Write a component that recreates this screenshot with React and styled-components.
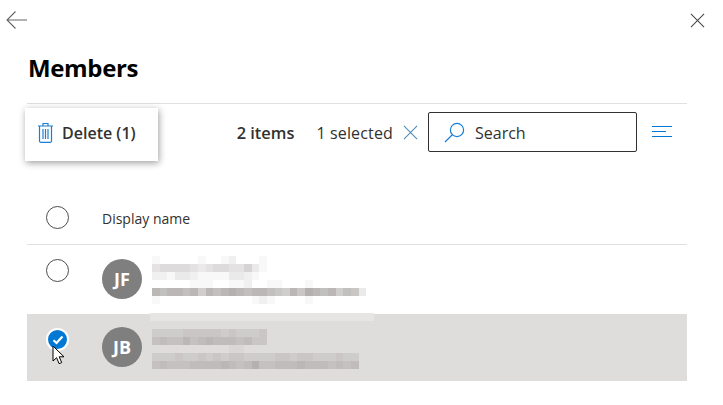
import React from "react";
import styled, { createGlobalStyle } from "styled-components";

const GlobalStyle = createGlobalStyle`
  html, body {
    margin: 0;
    background: #fff;
    font-family: "Open Sans", "Noto Sans", sans-serif;
    color: #323130;
  }
`;

const Page = styled.div`
  width: 723px;
  height: 405px;
  overflow: hidden;
  display: flex;
  flex-direction: column;
`;

const TopBar = styled.div`
  height: 41px;
  padding: 9px 18px 0 6px;
  box-sizing: border-box;
  display: flex;
  justify-content: space-between;
  align-items: flex-start;
`;

const IconButton = styled.button`
  border: none;
  background: none;
  padding: 0;
  display: flex;
  line-height: 0;
`;

const CloseButton = styled(IconButton)`
  margin-top: 4px;
`;

const Body = styled.div`
  padding: 0 36px 0 27px;
  display: flex;
  flex-direction: column;
`;

const Title = styled.h1`
  margin: 0;
  height: 63px;
  box-sizing: border-box;
  padding: 10px 0 0 1px;
  font-size: 24px;
  line-height: 34px;
  font-weight: 700;
  letter-spacing: -0.35px;
  color: #000;
  border-bottom: 1px solid #e1e0df;
`;

const Toolbar = styled.div`
  position: relative;
  height: 56px;
  display: flex;
  align-items: center;
  justify-content: flex-end;
  padding-right: 15px;
`;

const DeleteButton = styled.button`
  position: absolute;
  left: -2px;
  top: 4px;
  width: 133px;
  height: 53px;
  border: none;
  background: #fff;
  box-shadow: 1px 2px 7px rgba(0, 0, 0, 0.38);
  display: flex;
  align-items: center;
  gap: 8px;
  padding: 0 0 4px 12px;
  font: 600 16px "Open Sans", sans-serif;
  color: #323130;
`;

const Count = styled.span`
  font-size: 16.4px;
  font-weight: 600;
  margin-right: 22px;
`;

const Selected = styled.span`
  font-size: 16px;
  letter-spacing: 0.15px;
  padding-top: 1px;
  margin-right: 10px;
`;

const ClearButton = styled(IconButton)`
  margin-right: 10px;
`;

const SearchBox = styled.div`
  width: 209px;
  height: 40px;
  box-sizing: border-box;
  border: 1px solid #323130;
  border-radius: 2px;
  display: flex;
  align-items: center;
  gap: 10px;
  padding-left: 15px;
  font-size: 16px;
  margin-right: 15px;
`;

const SearchText = styled.span`
  padding-top: 1px;
`;

const HeaderRow = styled.div`
  height: 85px;
  box-sizing: border-box;
  padding-top: 46px;
  border-bottom: 1px solid #e1e0df;
  display: flex;
  align-items: flex-start;
`;

const HeaderLabel = styled.span`
  font-size: 14px;
  line-height: 18px;
  padding-top: 4px;
`;

const CheckCell = styled.div`
  width: 75px;
  padding-left: 19px;
  box-sizing: border-box;
  flex: none;
  position: relative;
`;

const Radio = styled.span`
  display: block;
  width: 23px;
  height: 23px;
  box-sizing: border-box;
  border: 1.5px solid #4f4d4b;
  border-radius: 50%;
  background: #fff;
`;

const Checked = styled.span`
  display: flex;
  align-items: center;
  justify-content: center;
  width: 23px;
  height: 23px;
  box-sizing: border-box;
  border: 2px solid #fff;
  border-radius: 50%;
  background: #0078d4;
`;

const Cursor = styled.svg`
  position: absolute;
  left: 25px;
  top: 17px;
`;

const Row = styled.div`
  height: ${(p) => p.$height}px;
  box-sizing: border-box;
  padding-top: ${(p) => p.$radioTop}px;
  background: ${(p) => (p.$selected ? "#dfdddc" : "#fff")};
  display: flex;
  align-items: flex-start;
`;

const Person = styled.div`
  display: flex;
  margin-top: ${(p) => p.$offset}px;
`;

const Avatar = styled.div`
  width: 40px;
  height: 40px;
  flex: none;
  border-radius: 50%;
  background: #7f7f7f;
  color: #fff;
  font-size: 18px;
  font-weight: 700;
  display: flex;
  align-items: center;
  justify-content: center;
  margin-right: 10px;
`;

const Mosaic = styled.div`
  margin-top: ${(p) => p.$top}px;
  display: flex;
  flex-direction: column;
`;

const MosaicRow = styled.div`
  display: flex;
  height: 8px;
`;

const Pixel = styled.span`
  width: 7.67px;
  height: 8px;
  flex: none;
`;

const Band = styled.div`
  width: 224px;
  height: 8px;
  margin-left: -2px;
  background: #e6e5e3;
`;

// redacted name and mail address, one string of grey levels per line
const shade = (code) => {
  const level = parseInt(code, 36);
  if (!level) return "transparent";
  return `rgba(120, 112, 112, ${level / 20})`;
};

const firstPerson = [
  "100000100120001",
  "455554345544631",
  "221332111133210",
  "000001110011200110001000",
  "a9aa9a7a9aba9aa987a8ba9a7983",
  "10000000000001210000100",
];

const secondPerson = [
  "000000000000000",
  "333344444343334",
  "565575676665644",
  "000000000011",
  "333433434344333344344333433",
  "565556666765685566676665656",
];

const Blur = ({ rows, top, children }) => (
  <Mosaic $top={top}>
    {children}
    {rows.map((line, y) => (
      <MosaicRow key={y}>
        {line.split("").map((c, x) => (
          <Pixel key={x} style={{ background: shade(c) }} />
        ))}
      </MosaicRow>
    ))}
  </Mosaic>
);

const Stripe = styled.div`
  height: 1px;
`;

const BackIcon = () => (
  <svg width="22" height="22" viewBox="0 0 22 22" fill="none" stroke="#666" strokeWidth="1.1">
    <path d="M21 11H1M9.5 2.5 1 11l8.5 8.5" />
  </svg>
);

const CloseIcon = ({ size, color }) => (
  <svg width={size} height={size} viewBox="0 0 16 16" fill="none" stroke={color} strokeWidth="1.1">
    <path d="M1 1l14 14M15 1 1 15" />
  </svg>
);

const TrashIcon = () => (
  <svg width="17" height="21" viewBox="0 0 17 21" fill="none" stroke="#1a7fd6" strokeWidth="1.2">
    <path d="M1 4h15M6 4V1.5h5V4M2.5 4v15a1.3 1.3 0 0 0 1.3 1.3h9.4a1.3 1.3 0 0 0 1.3-1.3V4M6 7v10M8.5 7v10M11 7v10" />
  </svg>
);

const SearchIcon = () => (
  <svg width="21" height="21" viewBox="0 0 21 21" fill="none" stroke="#1a7fd6" strokeWidth="1.2">
    <circle cx="13" cy="8" r="6.6" />
    <path d="M8.3 12.8 1 20" />
  </svg>
);

const SortIcon = () => (
  <svg width="20" height="12" viewBox="0 0 20 12" fill="none" stroke="#0078d4" strokeWidth="1">
    <path d="M0 .5h20M0 5.5h14M0 10.5h20" />
  </svg>
);

const CheckMark = () => (
  <svg width="12" height="10" viewBox="0 0 12 10" fill="none" stroke="#fff" strokeWidth="2.2">
    <path d="M1.5 5.2 4.5 8l6-6.5" />
  </svg>
);

const PointerIcon = () => (
  <Cursor width="14" height="20" viewBox="0 0 14 20">
    <path
      d="M1 1v15l3.6-3.3 2.5 6 2.6-1.1-2.5-5.8H12z"
      fill="#fff"
      stroke="#000"
      strokeWidth="1"
    />
  </Cursor>
);

export default function App() {
  return (
    <Page>
      <GlobalStyle />
      <TopBar>
        <IconButton>
          <BackIcon />
        </IconButton>
        <CloseButton>
          <CloseIcon size={15} color="#444" />
        </CloseButton>
      </TopBar>
      <Body>
        <Title>Members</Title>
        <Toolbar>
          <DeleteButton>
            <TrashIcon />
            Delete (1)
          </DeleteButton>
          <Count>2 items</Count>
          <Selected>1 selected</Selected>
          <ClearButton>
            <CloseIcon size={15} color="#4d8bb0" />
          </ClearButton>
          <SearchBox>
            <SearchIcon />
            <SearchText>Search</SearchText>
          </SearchBox>
          <IconButton>
            <SortIcon />
          </IconButton>
        </Toolbar>
        <HeaderRow>
          <CheckCell>
            <Radio />
          </CheckCell>
          <HeaderLabel>Display name</HeaderLabel>
        </HeaderRow>
        <Row $height={68} $radioTop={14}>
          <CheckCell>
            <Radio />
          </CheckCell>
          <Person $offset={0}>
            <Avatar>JF</Avatar>
            <Blur rows={firstPerson} top={-3} />
          </Person>
        </Row>
        <Stripe />
        <Row $selected $height={67} $radioTop={14}>
          <CheckCell>
            <Checked>
              <CheckMark />
            </Checked>
            <PointerIcon />
          </CheckCell>
          <Person $offset={-1}>
            <Avatar>JB</Avatar>
            <Blur rows={secondPerson} top={-14}>
              <Band />
            </Blur>
          </Person>
        </Row>
      </Body>
    </Page>
  );
}
